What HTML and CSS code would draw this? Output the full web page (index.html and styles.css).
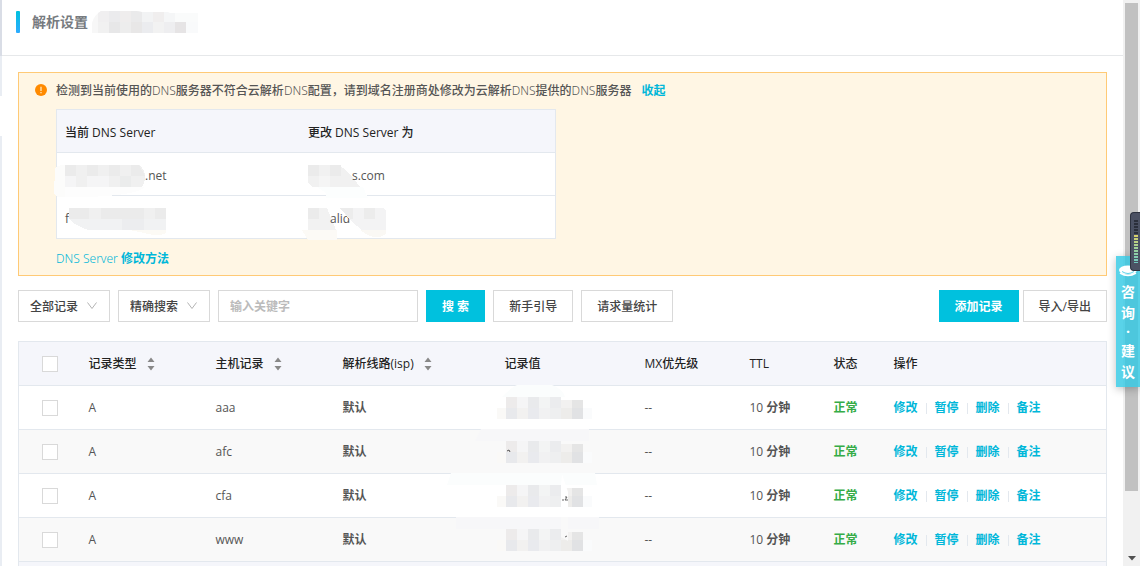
FILE: index.html
```html
<!DOCTYPE html>
<html lang="zh-CN">
<head>
<meta charset="utf-8">
<title>解析设置</title>
<link rel="stylesheet" href="styles.css">
</head>
<body>
<svg class="defs" aria-hidden="true">
  <symbol id="sort" viewBox="0 0 8 14"><path d="M4 0.5L7.5 5H0.5zM4 13.5L0.5 9H7.5z" fill="#888"/></symbol>
  <symbol id="chevron" viewBox="0 0 12 10"><path d="M1.5 1.5L6 7.5L10.500 1.500" fill="none" stroke="#b4b4b4"/></symbol>
  <symbol id="mosaic" viewBox="2 0 100 24">
    <g shape-rendering="crispEdges">
    <path d="M2 12h9v11H2z" fill="#faf9f7"/><path d="M88 12h9v11h-9z" fill="#fafbfc"/>
    <path d="M11 1h11v11H11z" fill="#edebeb"/><path d="M22 1h11v11H22z" fill="#f5f5f6"/><path d="M33 1h11v11H33z" fill="#e9eaec"/><path d="M44 1h11v11H44z" fill="#f3f4f4"/><path d="M55 1h11v11H55z" fill="#ebecee"/><path d="M66 4h11v8H66z" fill="#f2f1f0"/><path d="M77 4h11v8H77z" fill="#e5e5e5"/>
    <path d="M11 12h11v11H11z" fill="#e8e9ec"/><path d="M22 12h11v11H22z" fill="#f2f1f0"/><path d="M33 12h11v11H33z" fill="#e9eaee"/><path d="M44 12h11v11H44z" fill="#f1f1f2"/><path d="M55 12h11v11H55z" fill="#eeeff0"/><path d="M66 12h11v11H66z" fill="#edecea"/><path d="M77 12h11v11H77z" fill="#e1e2e4"/>
    </g>
  </symbol>
</svg>
<div class="shell">
  <div class="rail"><div class="rail-top"></div><div class="rail-mid"></div><div class="rail-gap"></div><div class="rail-rest"></div></div>
  <main class="main">
    <header class="head">
      <h1 class="title">解析设置</h1>
      <svg class="title-mask" viewBox="0 0 106 22" aria-hidden="true">
        <defs><clipPath id="tm"><path d="M0 22V12Q2 4 9 0H45L50 1H75L78 2H106V22z"/></clipPath></defs>
        <g clip-path="url(#tm)" shape-rendering="crispEdges">
          <path d="M0 0h106v22H0z" fill="#f7f7f7"/>
          <path d="M6 0h11v11H6z" fill="#f0eff0"/><path d="M17 0h11v11H17z" fill="#ebebed"/><path d="M28 0h11v11H28z" fill="#efeded"/><path d="M39 0h11v11H39z" fill="#eaeaeb"/><path d="M50 0h11v11H50z" fill="#f2f3f4"/><path d="M61 0h11v11H61z" fill="#f0eeee"/><path d="M72 0h11v11H72z" fill="#f5f6f7"/><path d="M83 0h23v11H83z" fill="#fafbfb"/>
          <path d="M6 11h11v11H6z" fill="#f1f1f1"/><path d="M17 11h11v11H17z" fill="#e7e7e8"/><path d="M28 11h11v11H28z" fill="#ededed"/><path d="M39 11h11v11H39z" fill="#e8e7e7"/><path d="M50 11h11v11H50z" fill="#ebecef"/><path d="M61 11h11v11H61z" fill="#f2f2f2"/><path d="M72 11h11v11H72z" fill="#eeeef0"/><path d="M83 11h11v11H83z" fill="#e6e4e5"/><path d="M94 11h12v11H94z" fill="#f9fafb"/>
        </g>
      </svg>
    </header>
    <div class="content">
      <section class="alert">
        <svg class="alert-icon" viewBox="0 0 12 12" aria-hidden="true"><circle cx="6" cy="6" r="6" fill="#ff8a00"/><path d="M6 2.800V7M6 8V9.200" stroke="#fff0d0" stroke-width="1.200"/></svg>
        <div class="alert-body">
          <p class="alert-text">检测到当前使用的<span class="thin">DNS</span>服务器不符合云解析<span class="thin">DNS</span>配置，请到域名注册商处修改为云解析<span class="thin">DNS</span>提供的<span class="thin">DNS</span>服务器<a class="link fold" href="#">收起</a></p>
          <table class="servers">
            <thead><tr><th>当前 DNS Server</th><th>更改 DNS Server 为</th></tr></thead>
            <tbody>
              <tr>
                <td><div class="masked"><svg class="m-80" viewBox="0 0 80 22" aria-hidden="true"><g shape-rendering="crispEdges"><path d="M-10 4Q-9 0 0 0V32H-8L-11 29z" fill="#fcfcfb"/><path d="M0 22H80Q70 31 18 32H0z" fill="#fdfdfd"/><path d="M0 0H74Q80 5 80 11Q80 18 77 22H0z" fill="#f0f0f0"/><path d="M0 0h11v11H0zM22 0h11v11H22zM44 0h11v11H44zM66 0h8l6 11H66z" fill="#ebebeb"/><path d="M0 11h11v11H0zM22 11h22v11H22z" fill="#f5f5f6"/><path d="M55 11h11v11H55z" fill="#ebecec"/></g></svg><span>.net</span></div></td>
                <td><div class="masked"><svg class="m-44" viewBox="0 0 44 22" aria-hidden="true"><g shape-rendering="crispEdges"><path d="M9 22H55L60 33H18V28z" fill="#fcfefe"/><path d="M0 0H31Q41 6 52 22H4L0 17z" fill="#f1f1f1"/><path d="M0 0h11v11H0zM22 0h11v11H22z" fill="#ebebeb"/><path d="M11 11h11v11H11z" fill="#f5f5f5"/></g></svg><span>s.com</span></div></td>
              </tr>
              <tr>
                <td><div class="masked"><span>f</span><svg class="m-97" viewBox="0 0 97 22" aria-hidden="true"><g shape-rendering="crispEdges"><path d="M50 20H97V25Q90 29 75 25z" fill="#fcfaf5"/><path d="M0 0H97V22H20Q5 18 0 10z" fill="#f1f2f3"/><path d="M0 0H97V11H0z" fill="#ebebeb"/><path d="M20 0h12v11H20zM75 0h11v11H75z" fill="#f0f0f0"/><path d="M53 11h22v11H53z" fill="#ecedef"/></g></svg></div></td>
                <td><div class="masked"><svg class="m-22" viewBox="0 0 22 22" aria-hidden="true"><g shape-rendering="crispEdges"><path d="M-6 22H29V32H0z" fill="#fcfaf6"/><path d="M0 0H19L28 22H0z" fill="#f2f2f2"/><path d="M0 0H11V11H0z" fill="#ebebeb"/></g></svg><span>alid</span><svg class="m-36" viewBox="0 0 36 22" aria-hidden="true"><g shape-rendering="crispEdges"><path d="M10 22H36V26Q26 34 10 22z" fill="#faf8f4"/><path d="M-10 0H33L36 3V22H12Q0 13 -10 0z" fill="#f3f3f4"/><path d="M-10 0H3V11H0zM14 0h11v11H14z" fill="#ececec"/></g></svg></div></td>
              </tr>
            </tbody>
          </table>
          <a class="link" href="#"><span class="thin">DNS Server</span> 修改方法</a>
        </div>
      </section>
      <form class="toolbar">
        <div class="pick"><select class="control" aria-label="记录范围"><option>全部记录</option></select><svg class="chevron" aria-hidden="true"><use href="#chevron"/></svg></div>
        <div class="pick"><select class="control" aria-label="搜索方式"><option>精确搜索</option></select><svg class="chevron" aria-hidden="true"><use href="#chevron"/></svg></div>
        <input class="control keyword" type="text" placeholder="输入关键字" aria-label="关键字">
        <button class="btn primary" type="button">搜 索</button>
        <button class="btn" type="button">新手引导</button>
        <button class="btn" type="button">请求量统计</button>
        <div class="right">
          <button class="btn primary" type="button">添加记录</button>
          <button class="btn" type="button">导入/导出</button>
        </div>
      </form>
      <table class="records">
        <colgroup><col class="c-check"><col class="c-type"><col class="c-host"><col class="c-line"><col class="c-value"><col class="c-mx"><col class="c-ttl"><col class="c-state"><col></colgroup>
        <thead><tr>
          <th class="check"><input type="checkbox" aria-label="全选"></th>
          <th><div class="sortable">记录类型<svg class="sort" aria-hidden="true"><use href="#sort"/></svg></div></th>
          <th><div class="sortable">主机记录<svg class="sort" aria-hidden="true"><use href="#sort"/></svg></div></th>
          <th><div class="sortable">解析线路(isp)<svg class="sort" aria-hidden="true"><use href="#sort"/></svg></div></th>
          <th>记录值</th><th>MX优先级</th><th>TTL</th><th>状态</th><th>操作</th>
        </tr></thead>
        <tbody>
          <tr><td class="check"><input type="checkbox" aria-label="选择 aaa"></td><td>A</td><td>aaa</td><td><b>默认</b></td><td class="value"><svg class="mosaic" aria-hidden="true"><path d="M5 1Q16 -10 20 -11H55Q66 -7 68 1z" fill="#fbfdfd"/><use href="#mosaic" width="100" height="24"/></svg></td><td>--</td><td>10 <b>分钟</b></td><td class="ok">正常</td><td><div class="actions"><a class="link" href="#">修改</a><a class="link" href="#">暂停</a><a class="link" href="#">删除</a><a class="link" href="#">备注</a></div></td></tr>
          <tr><td class="check"><input type="checkbox" aria-label="选择 afc"></td><td>A</td><td>afc</td><td><b>默认</b></td><td class="value"><svg class="mosaic" aria-hidden="true"><path d="M-16 -11H92V1H-22z" fill="#f7f7f9"/><use href="#mosaic" width="100" height="24"/><path d="M10 11l2 -1l1 2" fill="none" stroke="#555"/></svg></td><td>--</td><td>10 <b>分钟</b></td><td class="ok">正常</td><td><div class="actions"><a class="link" href="#">修改</a><a class="link" href="#">暂停</a><a class="link" href="#">删除</a><a class="link" href="#">备注</a></div></td></tr>
          <tr><td class="check"><input type="checkbox" aria-label="选择 cfa"></td><td>A</td><td>cfa</td><td><b>默认</b></td><td class="value"><svg class="mosaic" aria-hidden="true"><path d="M-46 -11H98L100 1H-50z" fill="#fbfdfd"/><use href="#mosaic" width="100" height="24"/><path d="M65 -10L71 8V23H64V1z" fill="#fff"/><path d="M66 15v2M68 13h2l-2 3h3" fill="none" stroke="#666"/></svg></td><td>--</td><td>10 <b>分钟</b></td><td class="ok">正常</td><td><div class="actions"><a class="link" href="#">修改</a><a class="link" href="#">暂停</a><a class="link" href="#">删除</a><a class="link" href="#">备注</a></div></td></tr>
          <tr><td class="check"><input type="checkbox" aria-label="选择 www"></td><td>A</td><td>www</td><td><b>默认</b></td><td class="value"><svg class="mosaic" aria-hidden="true"><path d="M-41 -11H102V1H-41z" fill="#f7f7f9"/><use href="#mosaic" width="100" height="24"/><path d="M64 -11H71V13L64 9z" fill="#f9f9f9"/><path d="M68 9l2 -1" fill="none" stroke="#666"/></svg></td><td>--</td><td>10 <b>分钟</b></td><td class="ok">正常</td><td><div class="actions"><a class="link" href="#">修改</a><a class="link" href="#">暂停</a><a class="link" href="#">删除</a><a class="link" href="#">备注</a></div></td></tr>
        </tbody>
        <tfoot><tr><td colspan="9"></td></tr></tfoot>
      </table>
    </div>
  </main>
  <div class="scrollbar" aria-hidden="true">
    <div class="thumb"></div>
    <svg class="arrow" viewBox="0 0 8 5"><path d="M0 0H8L4 4.500z" fill="#505050"/></svg>
  </div>
  <a class="consult" href="#">
    <svg class="consult-icon" viewBox="0 0 18 12" aria-hidden="true"><ellipse cx="9" cy="5" rx="9" ry="4.500" fill="#fff"/><path d="M1 8Q9 13 17 8" fill="none" stroke="#fff" stroke-width="1.500"/><path d="M3 6.500Q9 10.500 15 6.500" fill="none" stroke="#5bd3ea" stroke-width="1"/></svg>
    <span>咨</span><span>询</span><span class="dot">·</span><span>建</span><span>议</span>
  </a>
  <div class="meter" aria-hidden="true"><div class="meter-bars"></div></div>
</div>
</body>
</html>
```
FILE: styles.css
```css
* { box-sizing: border-box; }
body {
  margin: 0;
  background: #fff;
  color: #555;
  font: 500 12px/18px "Open Sans", "Noto Sans CJK SC", sans-serif;
}
.defs { display: none; }
.shell { position: relative; display: flex; height: 100vh; overflow: hidden; }

.rail { display: flex; flex-direction: column; flex: 0 0 2px; }
.rail-top { height: 56px; background: #d9dde6; }
.rail-mid { height: 40px; background: #e9edf3; }
.rail-gap { height: 40px; }
.rail-rest { flex: 1; background: #e9edf3; }

.main { flex: 1; min-width: 0; }
.head {
  display: flex;
  gap: 4px;
  height: 56px;
  padding: 11px 14px;
  border-bottom: 1px solid #e6e8ea;
}
.title {
  display: flex;
  align-items: center;
  gap: 12px;
  height: 22px;
  margin: 0;
  color: #777b80;
  font-size: 14px;
  font-weight: 700;
}
.title::before {
  content: "";
  width: 4px;
  height: 22px;
  border-radius: 1px;
  background: linear-gradient(#00c1de, #2eabff);
}
.title-mask { width: 106px; height: 22px; }
.content { padding: 16px 16px 0; }

.link { color: #00b7d9; text-decoration: none; font-weight: 700; }
.thin { font-family: "Noto Sans", "Open Sans", sans-serif; font-weight: 300; }

.alert {
  display: flex;
  gap: 9px;
  padding: 9px 16px 7px;
  border: 1px solid #ffca76;
  background: #fff6e4;
}
.alert-icon { flex: none; width: 12px; height: 12px; margin-top: 2px; }
.alert-text { margin: 0 0 9px; }
.fold { margin-left: 10px; }
.servers {
  width: 500px;
  max-width: 100%;
  margin-bottom: 11px;
  border-collapse: collapse;
  table-layout: fixed;
  background: #fff;
}
.servers, .servers tr { border: 1px solid #e3e8ee; }
.servers tr { height: 43px; }
.servers th, .servers td { padding: 3px 8px 0; text-align: left; }
.servers th:last-child, .servers td:last-child { padding-left: 2px; }
th { color: #222; font-weight: 500; }
.servers thead, .records thead { background: #f5f6fb; }
.masked { display: flex; align-items: center; }
.masked svg { flex: none; height: 22px; overflow: visible; }
.m-22 { width: 22px; }
.m-36 { width: 36px; }
.m-44 { width: 44px; }
.m-80 { width: 80px; }
.m-97 { width: 97px; }

.toolbar { display: flex; gap: 8px; margin: 14px 0 19px; }
.pick { position: relative; }
.control, .btn {
  height: 32px;
  margin: 0;
  border: 1px solid #d9d9d9;
  border-radius: 0;
  background: #fff;
  color: #444;
  font: inherit;
}
.control { appearance: none; padding: 1px 11px 0; }
.pick .control { width: 92px; }
.keyword { width: 200px; }
.keyword::placeholder { color: #bbb; font-weight: 700; opacity: 1; }
.chevron { position: absolute; right: 12px; top: 11px; width: 12px; height: 10px; pointer-events: none; }
.btn { padding: 2px 15px 0; white-space: nowrap; }
.primary { border-color: #00c1de; background: #00c1de; color: #fff; font-weight: 700; }
.right { display: flex; gap: 4px; margin-left: auto; }

.records {
  width: 100%;
  border: 1px solid #e3e8ee;
  border-collapse: collapse;
  table-layout: fixed;
}
.records tr { height: 44px; border-bottom: 1px solid #e3e8ee; }
.records th, .records td { padding: 1px 0 0 8px; text-align: left; }
.records tbody tr:nth-child(even) { background: #f9f9f9; }
.records tfoot { background: #f5f6fb; }
.c-check { width: 62px; }
.c-type, .c-host { width: 127px; }
.c-line { width: 162px; }
.c-value { width: 140px; }
.c-mx { width: 105px; }
.c-ttl { width: 84px; }
.c-state { width: 60px; }
.records .check { padding: 0 0 0 23px; }
.check input {
  display: block;
  width: 16px;
  height: 16px;
  margin: 0;
  border: 1px solid #d9d9d9;
  background: #fff;
  appearance: none;
}
.sortable { display: flex; align-items: center; gap: 10px; }
.sort { width: 8px; height: 14px; }
.records .value { padding: 0; }
.mosaic { display: block; width: 100px; height: 24px; overflow: visible; }
.records .ok { color: #35ac47; font-weight: 700; }
.actions { display: flex; align-items: center; }
.actions .link + .link { display: flex; align-items: center; }
.actions .link + .link::before {
  content: "";
  width: 1px;
  height: 11px;
  margin: 0 8px;
  background: #e3e8ee;
}

.scrollbar {
  display: flex;
  flex: 0 0 17px;
  flex-direction: column;
  align-items: center;
  justify-content: space-between;
  padding: 3px 2px 5px;
  background: #f1f1f1;
}
.thumb { width: 13px; height: 87.5%; background: #c1c1c1; }
.arrow { width: 8px; height: 5px; }
.consult {
  position: absolute;
  top: 256px;
  right: 0;
  display: flex;
  flex-direction: column;
  align-items: center;
  width: 24px;
  padding: 9px 0 5px;
  background: rgba(48, 200, 228, 0.8);
  box-shadow: 0 2px 8px rgba(0, 0, 0, 0.25);
  color: #fff;
  font-size: 14px;
  font-weight: 700;
  line-height: 21px;
  text-decoration: none;
}
.consult-icon { width: 18px; height: 12px; margin-bottom: 4px; }
.consult .dot { line-height: 17px; }
.meter {
  position: absolute;
  top: 212px;
  right: 0;
  width: 10px;
  height: 59px;
  padding: 7px 2px 7px 3px;
  border: 1px solid #2e3340;
  border-right: 0;
  border-radius: 4px 0 0 4px;
  background: #4b5163;
}
.meter-bars {
  height: 100%;
  background:
    repeating-linear-gradient(transparent 0 2px, #4b5163 2px 3px),
    linear-gradient(#2b2f3b 36%, #d9cf6a 36%, #9fd39a 66%, #6fc9c0);
}
```
